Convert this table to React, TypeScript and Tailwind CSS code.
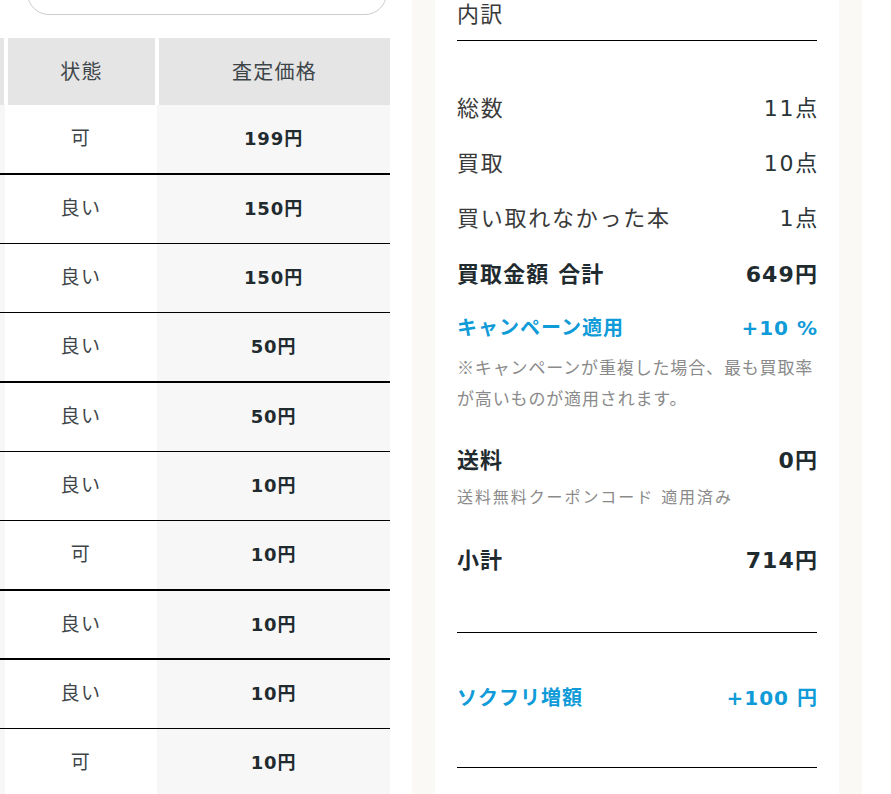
import React from "react";

type Row = { state: string; price: string; thick: boolean; tall: boolean };

const rows: Row[] = [
  { state: "可", price: "199円", thick: true, tall: true },
  { state: "良い", price: "150円", thick: false, tall: false },
  { state: "良い", price: "150円", thick: false, tall: false },
  { state: "良い", price: "50円", thick: true, tall: true },
  { state: "良い", price: "50円", thick: false, tall: false },
  { state: "良い", price: "10円", thick: false, tall: false },
  { state: "可", price: "10円", thick: true, tall: true },
  { state: "良い", price: "10円", thick: true, tall: false },
  { state: "良い", price: "10円", thick: false, tall: false },
  { state: "可", price: "10円", thick: false, tall: false },
];

const SummaryRow: React.FC<{ label: string; value: string }> = ({ label, value }) => (
  <div className="flex h-[55px] items-center justify-between text-[22px] tracking-[0.08em] text-[#3a3a3a]">
    <span>{label}</span>
    <span className="-mr-[2px] text-[#2b3538]">{value}</span>
  </div>
);

const App: React.FC = () => {
  return (
    <div className="flex min-h-screen items-start overflow-hidden bg-white font-['DejaVu_Sans','Noto_Sans_CJK_JP',sans-serif]">
      {/* 査定結果テーブル */}
      <div className="w-[390px] shrink-0">
        <div className="-mt-[45px] ml-[27px] h-[60px] w-[360px] rounded-[22px] border border-[#cccccc]" />

        <div className="mt-[23px] flex h-[67px] gap-[4px] bg-white text-[20px] tracking-[0.06em] text-[#3d4549]">
          <div className="w-[4px] bg-[#e5e5e5]" />
          <div className="flex w-[147px] items-center justify-center bg-[#e5e5e5]">状態</div>
          <div className="flex flex-1 items-center justify-center bg-[#e5e5e5]">査定価格</div>
        </div>

        {rows.map((r, i) => (
          <div
            key={i}
            className={`flex ${r.tall ? "h-[70px]" : "h-[69px]"} ${r.thick ? "border-b-2" : "border-b"} border-black`}
          >
            <div className="w-[5px] bg-[#f7f7f7]" />
            <div className="flex w-[152px] items-center justify-center pb-[1px] text-[19px] tracking-[0.08em] text-[#3d4549]">
              {r.state}
            </div>
            <div className="flex flex-1 items-center justify-center bg-[#f7f7f7] pb-[1px] text-[18px] font-bold tracking-[0.05em] text-[#1f2b2f]">
              {r.price}
            </div>
          </div>
        ))}
      </div>

      {/* 内訳 */}
      <div className="ml-[22px] w-[450px] shrink-0 self-stretch bg-[#faf9f5] px-[23px]">
        <div className="h-full bg-white px-[22px]">
          <div className="border-b border-black pb-[10px] text-[22px] leading-[30px] tracking-[0.06em] text-[#3a3a3a]">
            内訳
          </div>

          <div className="mt-[40px]">
            <SummaryRow label="総数" value="11点" />
            <SummaryRow label="買取" value="10点" />
            <SummaryRow label="買い取れなかった本" value="1点" />
          </div>

          <div className="mt-[1px] flex h-[55px] items-center justify-between text-[22px] font-bold tracking-[0.05em] text-[#1f2b2f]">
            <span>買取金額 合計</span>
            <span className="-mr-[1px]">649円</span>
          </div>

          <div className="mt-[6px] flex h-[40px] items-center justify-between text-[20px] font-bold tracking-[0.05em] text-[#0f9bd8]">
            <span>キャンペーン適用</span>
            <span className="-mr-[1px]">+10 %</span>
          </div>

          <p className="-mr-[10px] mt-[3px] whitespace-nowrap font-['Noto_Sans_CJK_JP',sans-serif] text-[17px] leading-[31px] tracking-[0.05em] text-[#8a8a8a]">
            ※キャンペーンが重複した場合、最も買取率
            <br />
            が高いものが適用されます。
          </p>

          <div className="mt-[27px] flex h-[40px] items-center justify-between text-[22px] font-bold tracking-[0.05em] text-[#1f2b2f]">
            <span>送料</span>
            <span className="-mr-[1px]">0円</span>
          </div>
          <p className="mt-[6px] text-[16px] leading-[24px] tracking-[0.12em] text-[#8a8a8a]">
            送料無料クーポンコード 適用済み
          </p>

          <div className="mt-[30px] flex h-[40px] items-center justify-between text-[22px] font-bold tracking-[0.05em] text-[#1f2b2f]">
            <span>小計</span>
            <span className="-mr-[1px]">714円</span>
          </div>

          <div className="mt-[52px] border-b border-black" />

          <div className="mt-[45px] flex h-[40px] items-center justify-between text-[20px] font-bold tracking-[0.05em] text-[#0f9bd8]">
            <span>ソクフリ増額</span>
            <span className="-mr-[1px]">+100 円</span>
          </div>

          <div className="mt-[49px] border-b border-black" />
        </div>
      </div>
    </div>
  );
};

export default App;
